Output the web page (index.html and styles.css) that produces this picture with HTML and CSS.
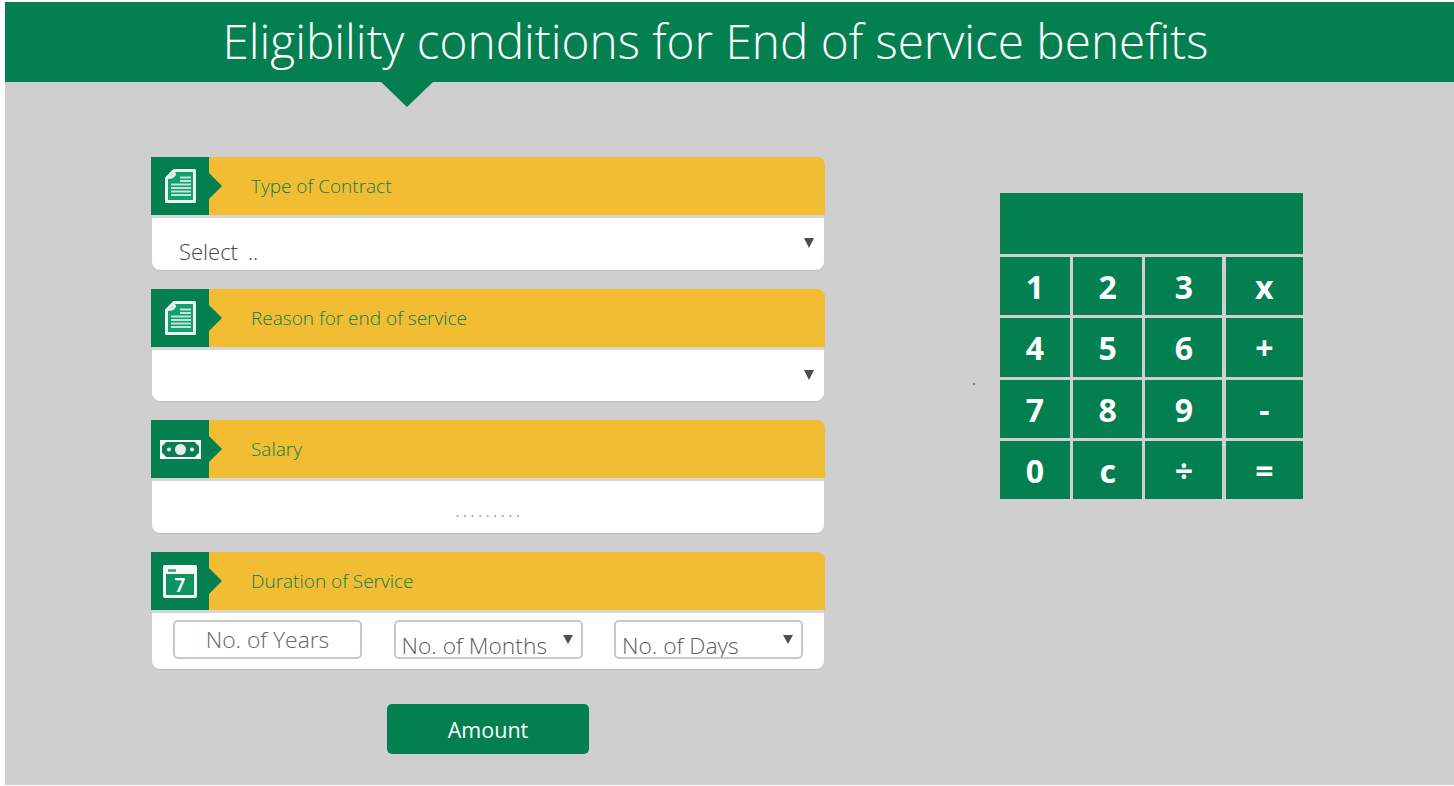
FILE: index.html
```html
<!DOCTYPE html>
<html lang="en">
<head>
    <meta charset="UTF-8">
    <title>Eligibility conditions for End of service benefits</title>
    <link rel="stylesheet" href="styles.css">
</head>
<body>
    <div class="page">
        <header class="title-bar">
            <h1>Eligibility conditions for End of service benefits</h1>
        </header>
        <main class="content">
            <form class="form-col">
                <section class="panel">
                    <div class="panel-head">
                        <span class="panel-icon">
                            <svg width="31" height="34" viewBox="0 0 31 34"><path d="M9 1.500H29.500V32.500H1.500V9Z" fill="#12a06c" stroke="#eaf5f0" stroke-width="3" stroke-linejoin="round"/><path d="M9 1.500C9 5 7 8 1.500 9C5 10 10 9 10.500 5Z" fill="#eaf5f0" stroke="#eaf5f0"/><path d="M15 8.500H26M15 12H26M6 15.500H26M6 19H26M6 22.500H26M6 26H26" stroke="#c0e6d6" stroke-width="2"/></svg>
                        </span>
                        <label class="panel-label">Type of Contract</label>
                    </div>
                    <div class="panel-body select-body">
                        <select class="big-select"><option>Select ..</option></select>
                        <span class="arrow"></span>
                    </div>
                </section>
                <section class="panel">
                    <div class="panel-head">
                        <span class="panel-icon">
                            <svg width="31" height="34" viewBox="0 0 31 34"><path d="M9 1.500H29.500V32.500H1.500V9Z" fill="#12a06c" stroke="#eaf5f0" stroke-width="3" stroke-linejoin="round"/><path d="M9 1.500C9 5 7 8 1.500 9C5 10 10 9 10.500 5Z" fill="#eaf5f0" stroke="#eaf5f0"/><path d="M15 8.500H26M15 12H26M6 15.500H26M6 19H26M6 22.500H26M6 26H26" stroke="#c0e6d6" stroke-width="2"/></svg>
                        </span>
                        <label class="panel-label">Reason for end of service</label>
                    </div>
                    <div class="panel-body select-body short">
                        <select class="big-select"><option></option></select>
                        <span class="arrow"></span>
                    </div>
                </section>
                <section class="panel">
                    <div class="panel-head">
                        <span class="panel-icon">
                            <svg width="41" height="19" viewBox="0 0 41 19"><rect width="41" height="19" fill="#fff"/><path d="M6 2.500H35C36 4 37 5 38.500 6V13C37 14 36 15 35 16.500H6C5 15 4 14 2.500 13V6C4 5 5 4 6 2.500Z" fill="#0a8052" stroke="#0a8052"/><ellipse cx="20.500" cy="9.500" rx="5.500" ry="5.500" fill="#e9eeec"/><circle cx="9" cy="9.500" r="2" fill="#e9eeec"/><circle cx="32" cy="9.500" r="2" fill="#e9eeec"/></svg>
                        </span>
                        <label class="panel-label">Salary</label>
                    </div>
                    <div class="panel-body salary-body">
                        <input class="salary-input" type="text" placeholder=".........">
                    </div>
                </section>
                <section class="panel">
                    <div class="panel-head">
                        <span class="panel-icon">
                            <svg width="34" height="33" viewBox="0 0 34 33"><rect width="34" height="33" rx="2" fill="#f4f8f6"/><rect x="3" y="9" width="28" height="21" fill="#0c9560"/><path d="M5 5.500H13" stroke="#3c9a75" stroke-width="2.500"/><text x="17" y="27" class="cal-day">7</text></svg>
                        </span>
                        <label class="panel-label">Duration of Service</label>
                    </div>
                    <div class="panel-body duration-body">
                        <input class="small-field years" type="text" placeholder="No. of Years">
                        <div class="small-wrap">
                            <select class="small-field small-select"><option>No. of Months</option></select>
                            <span class="arrow"></span>
                        </div>
                        <div class="small-wrap">
                            <select class="small-field small-select"><option>No. of Days</option></select>
                            <span class="arrow"></span>
                        </div>
                    </div>
                </section>
                <button class="amount-btn" type="button">Amount</button>
            </form>
            <span class="stray-dot"></span>
            <div class="calc">
                <div class="calc-screen"></div>
                <button type="button">1</button>
                <button type="button">2</button>
                <button type="button">3</button>
                <button type="button">x</button>
                <button type="button">4</button>
                <button type="button">5</button>
                <button type="button">6</button>
                <button type="button">+</button>
                <button type="button">7</button>
                <button type="button">8</button>
                <button type="button">9</button>
                <button type="button">-</button>
                <button type="button">0</button>
                <button type="button">c</button>
                <button type="button">÷</button>
                <button type="button">=</button>
            </div>
        </main>
    </div>
</body>
</html>
```

FILE: styles.css
```css
* {
    box-sizing: border-box;
}

body {
    font-family: "Open Sans", "Noto Sans", sans-serif;
    margin: 0;
    height: 786px;
    overflow: hidden;
    background-color: #fff;
    padding: 2px 0 1px 5px;
}

.page {
    height: 783px;
    background-color: #cfcfcf;
}

.title-bar {
    position: relative;
    height: 80px;
    background-color: #047f4f;
    text-align: center;
    padding-right: 28px;
}

.title-bar::after {
    content: "";
    position: absolute;
    left: 376px;
    top: 80px;
    border-left: 26px solid transparent;
    border-right: 26px solid transparent;
    border-top: 25px solid #047f4f;
}

h1 {
    margin: 0;
    color: #fff;
    font-size: 47.7px;
    font-weight: 300;
    line-height: 77px;
}

.content {
    position: relative;
    display: flex;
    align-items: flex-start;
    padding: 75px 0 0 146px;
}

.form-col {
    width: 674px;
    display: flex;
    flex-direction: column;
}

.panel {
    margin-bottom: 19px;
}

.panel-head {
    display: flex;
    align-items: center;
    height: 58px;
    background-color: #f3bd33;
    border-radius: 0 8px 0 0;
    position: relative;
    z-index: 1;
}

.panel-icon {
    position: relative;
    display: flex;
    align-items: center;
    justify-content: center;
    width: 58px;
    height: 58px;
    background-color: #047f4f;
}

.panel-icon::after {
    content: "";
    position: absolute;
    left: 58px;
    top: 16px;
    border-top: 13px solid transparent;
    border-bottom: 13px solid transparent;
    border-left: 13px solid #047f4f;
}

.panel-label {
    margin-left: 42px;
    color: #047f4f;
    font-size: 19px;
    font-weight: 300;
}

.panel-body {
    position: relative;
    margin: 0 1px 0 1px;
    background-color: #fff;
    border-radius: 0 0 8px 8px;
    border-top: 3px solid #d6d6d6;
    box-shadow: 0 1px 1px #bdbdbd;
}

.select-body {
    height: 55px;
}

.select-body.short {
    height: 54px;
}

.salary-body {
    height: 55px;
}

.big-select {
    appearance: none;
    width: 100%;
    height: 51px;
    padding: 15px 27px 0;
    border: none;
    background: transparent;
    color: #4c4542;
    font-family: inherit;
    font-size: 22px;
    font-weight: 300;
    word-spacing: 4px;
}

.arrow {
    position: absolute;
    right: 10px;
    top: 20px;
    border-left: 5px solid transparent;
    border-right: 5px solid transparent;
    border-top: 10px solid #4f4f4f;
    pointer-events: none;
}

.salary-input {
    width: 100%;
    height: 52px;
    padding: 4px 0 0 2px;
    border: none;
    background: transparent;
    text-align: center;
    font-family: inherit;
    font-size: 20px;
    letter-spacing: 2.8px;
}

.salary-input::placeholder {
    color: #888;
    font-weight: 300;
}

.duration-body {
    display: flex;
    justify-content: space-between;
    height: 59px;
    padding: 7px 21px 0;
}

.small-wrap {
    position: relative;
}

.small-wrap .arrow {
    right: 10px;
    top: 15px;
    border-top-width: 9px;
}

.small-field {
    height: 39px;
    border: 2px solid #c8c8c8;
    border-radius: 5px;
    background: #fff;
    color: #5c5c5c;
    font-family: inherit;
    font-size: 22.8px;
    font-weight: 300;
}

.years {
    width: 189px;
    text-align: center;
    padding: 0;
}

.years::placeholder {
    color: #666;
}

.small-select {
    appearance: none;
    display: block;
    width: 189px;
    padding: 8px 6px 0;
}

.amount-btn {
    align-self: center;
    width: 202px;
    height: 50px;
    margin-top: 16px;
    border: none;
    border-radius: 5px;
    background-color: #047f4f;
    color: #fff;
    font-family: inherit;
    font-size: 21.5px;
    font-weight: 400;
    cursor: pointer;
}

.stray-dot {
    position: absolute;
    left: 968px;
    top: 301px;
    width: 2px;
    height: 2px;
    background-color: #777;
}

.calc {
    display: grid;
    grid-template-columns: 70px 69px 77px 77.5px;
    grid-template-rows: 61px repeat(4, 58.3px);
    gap: 3px 3.2px;
    margin: 36px 0 0 175px;
}

.calc-screen {
    grid-column: 1 / -1;
    margin-bottom: 1px;
    height: 61px;
    background-color: #047f4f;
}

.calc button {
    border: none;
    padding: 2px 0 0;
    background-color: #047f4f;
    color: #fff;
    font-family: "Noto Sans", sans-serif;
    font-size: 32px;
    font-weight: 700;
    line-height: 1;
    cursor: pointer;
}

.cal-day {
    fill: #fff;
    font-family: "Noto Sans", sans-serif;
    font-size: 19px;
    font-weight: 600;
    text-anchor: middle;
}
```
